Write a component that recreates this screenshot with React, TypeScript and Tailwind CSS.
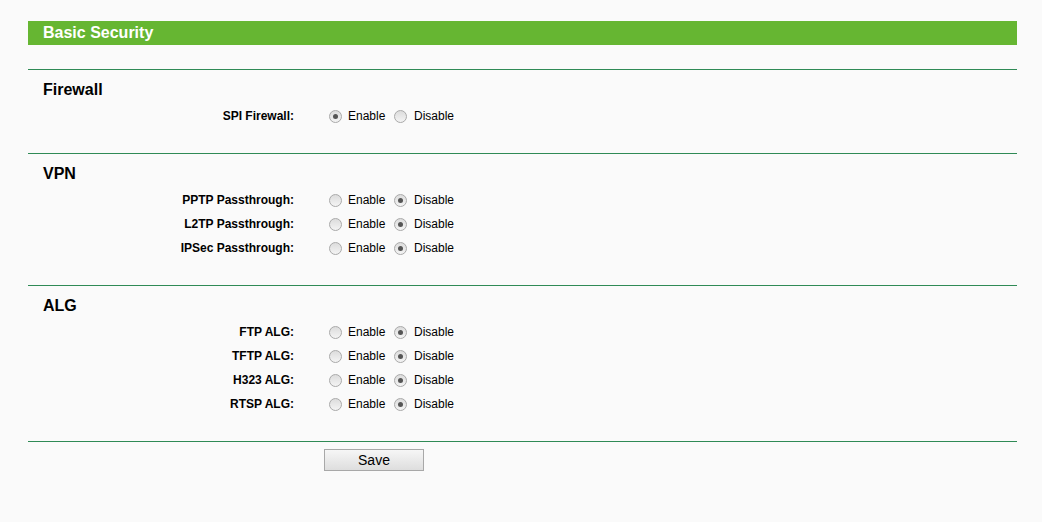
import React from "react";

type Row = { label: string; enabled: boolean };

const Radio = ({ checked }: { checked: boolean }) => (
  <span className="relative inline-block w-[13px] h-[13px] rounded-full border border-[#a9a9a9] bg-gradient-to-b from-[#dcdcdc] to-[#f4f4f4] shrink-0">
    {checked && (
      <span className="absolute left-[3px] top-[3px] w-[5px] h-[5px] rounded-full bg-[#555]" />
    )}
  </span>
);

const Line = () => <div className="h-px bg-[#2f8a55]" />;

const Section = ({ title, rows }: { title: string; rows: Row[] }) => (
  <div>
    <Line />
    <div className="pt-[11px] pb-[25px]">
      <div className="h-[18px] leading-[18px] pl-[15px] text-[16px] font-bold text-black">{title}</div>
      <div className="mt-[5px]">
        {rows.map((r) => (
          <div key={r.label} className="flex items-center h-[24px]">
            <div className="w-[266px] text-right text-[12px] font-bold text-black">{r.label}</div>
            <div className="flex items-center ml-[35px]">
              <Radio checked={r.enabled} />
              <span className="ml-[6px] text-[12px] text-black w-[46px] -mt-px">Enable</span>
              <Radio checked={!r.enabled} />
              <span className="ml-[7px] text-[12px] text-black -mt-px">Disable</span>
            </div>
          </div>
        ))}
      </div>
    </div>
  </div>
);

export default function App() {
  return (
    <div className="w-[1042px] h-[522px] bg-[#fafafa] font-['Liberation_Sans',Arial,sans-serif]">
      <div className="pt-[21px] pl-[28px] w-[1017px]">
        <div className="h-[24px] bg-[#66b632] text-white font-bold text-[16px] leading-[24px] pl-[15px]">
          Basic Security
        </div>
        <div className="h-[24px]" />
        <Section title="Firewall" rows={[{ label: "SPI Firewall:", enabled: true }]} />
        <Section
          title="VPN"
          rows={[
            { label: "PPTP Passthrough:", enabled: false },
            { label: "L2TP Passthrough:", enabled: false },
            { label: "IPSec Passthrough:", enabled: false },
          ]}
        />
        <Section
          title="ALG"
          rows={[
            { label: "FTP ALG:", enabled: false },
            { label: "TFTP ALG:", enabled: false },
            { label: "H323 ALG:", enabled: false },
            { label: "RTSP ALG:", enabled: false },
          ]}
        />
        <Line />
        <div className="pt-[6px] pl-[296px]">
          <button className="w-[100px] h-[22px] border border-[#a8a8a8] bg-gradient-to-b from-[#f6f6f6] to-[#dedede] text-[14px] text-black leading-[20px]">
            Save
          </button>
        </div>
      </div>
    </div>
  );
}
